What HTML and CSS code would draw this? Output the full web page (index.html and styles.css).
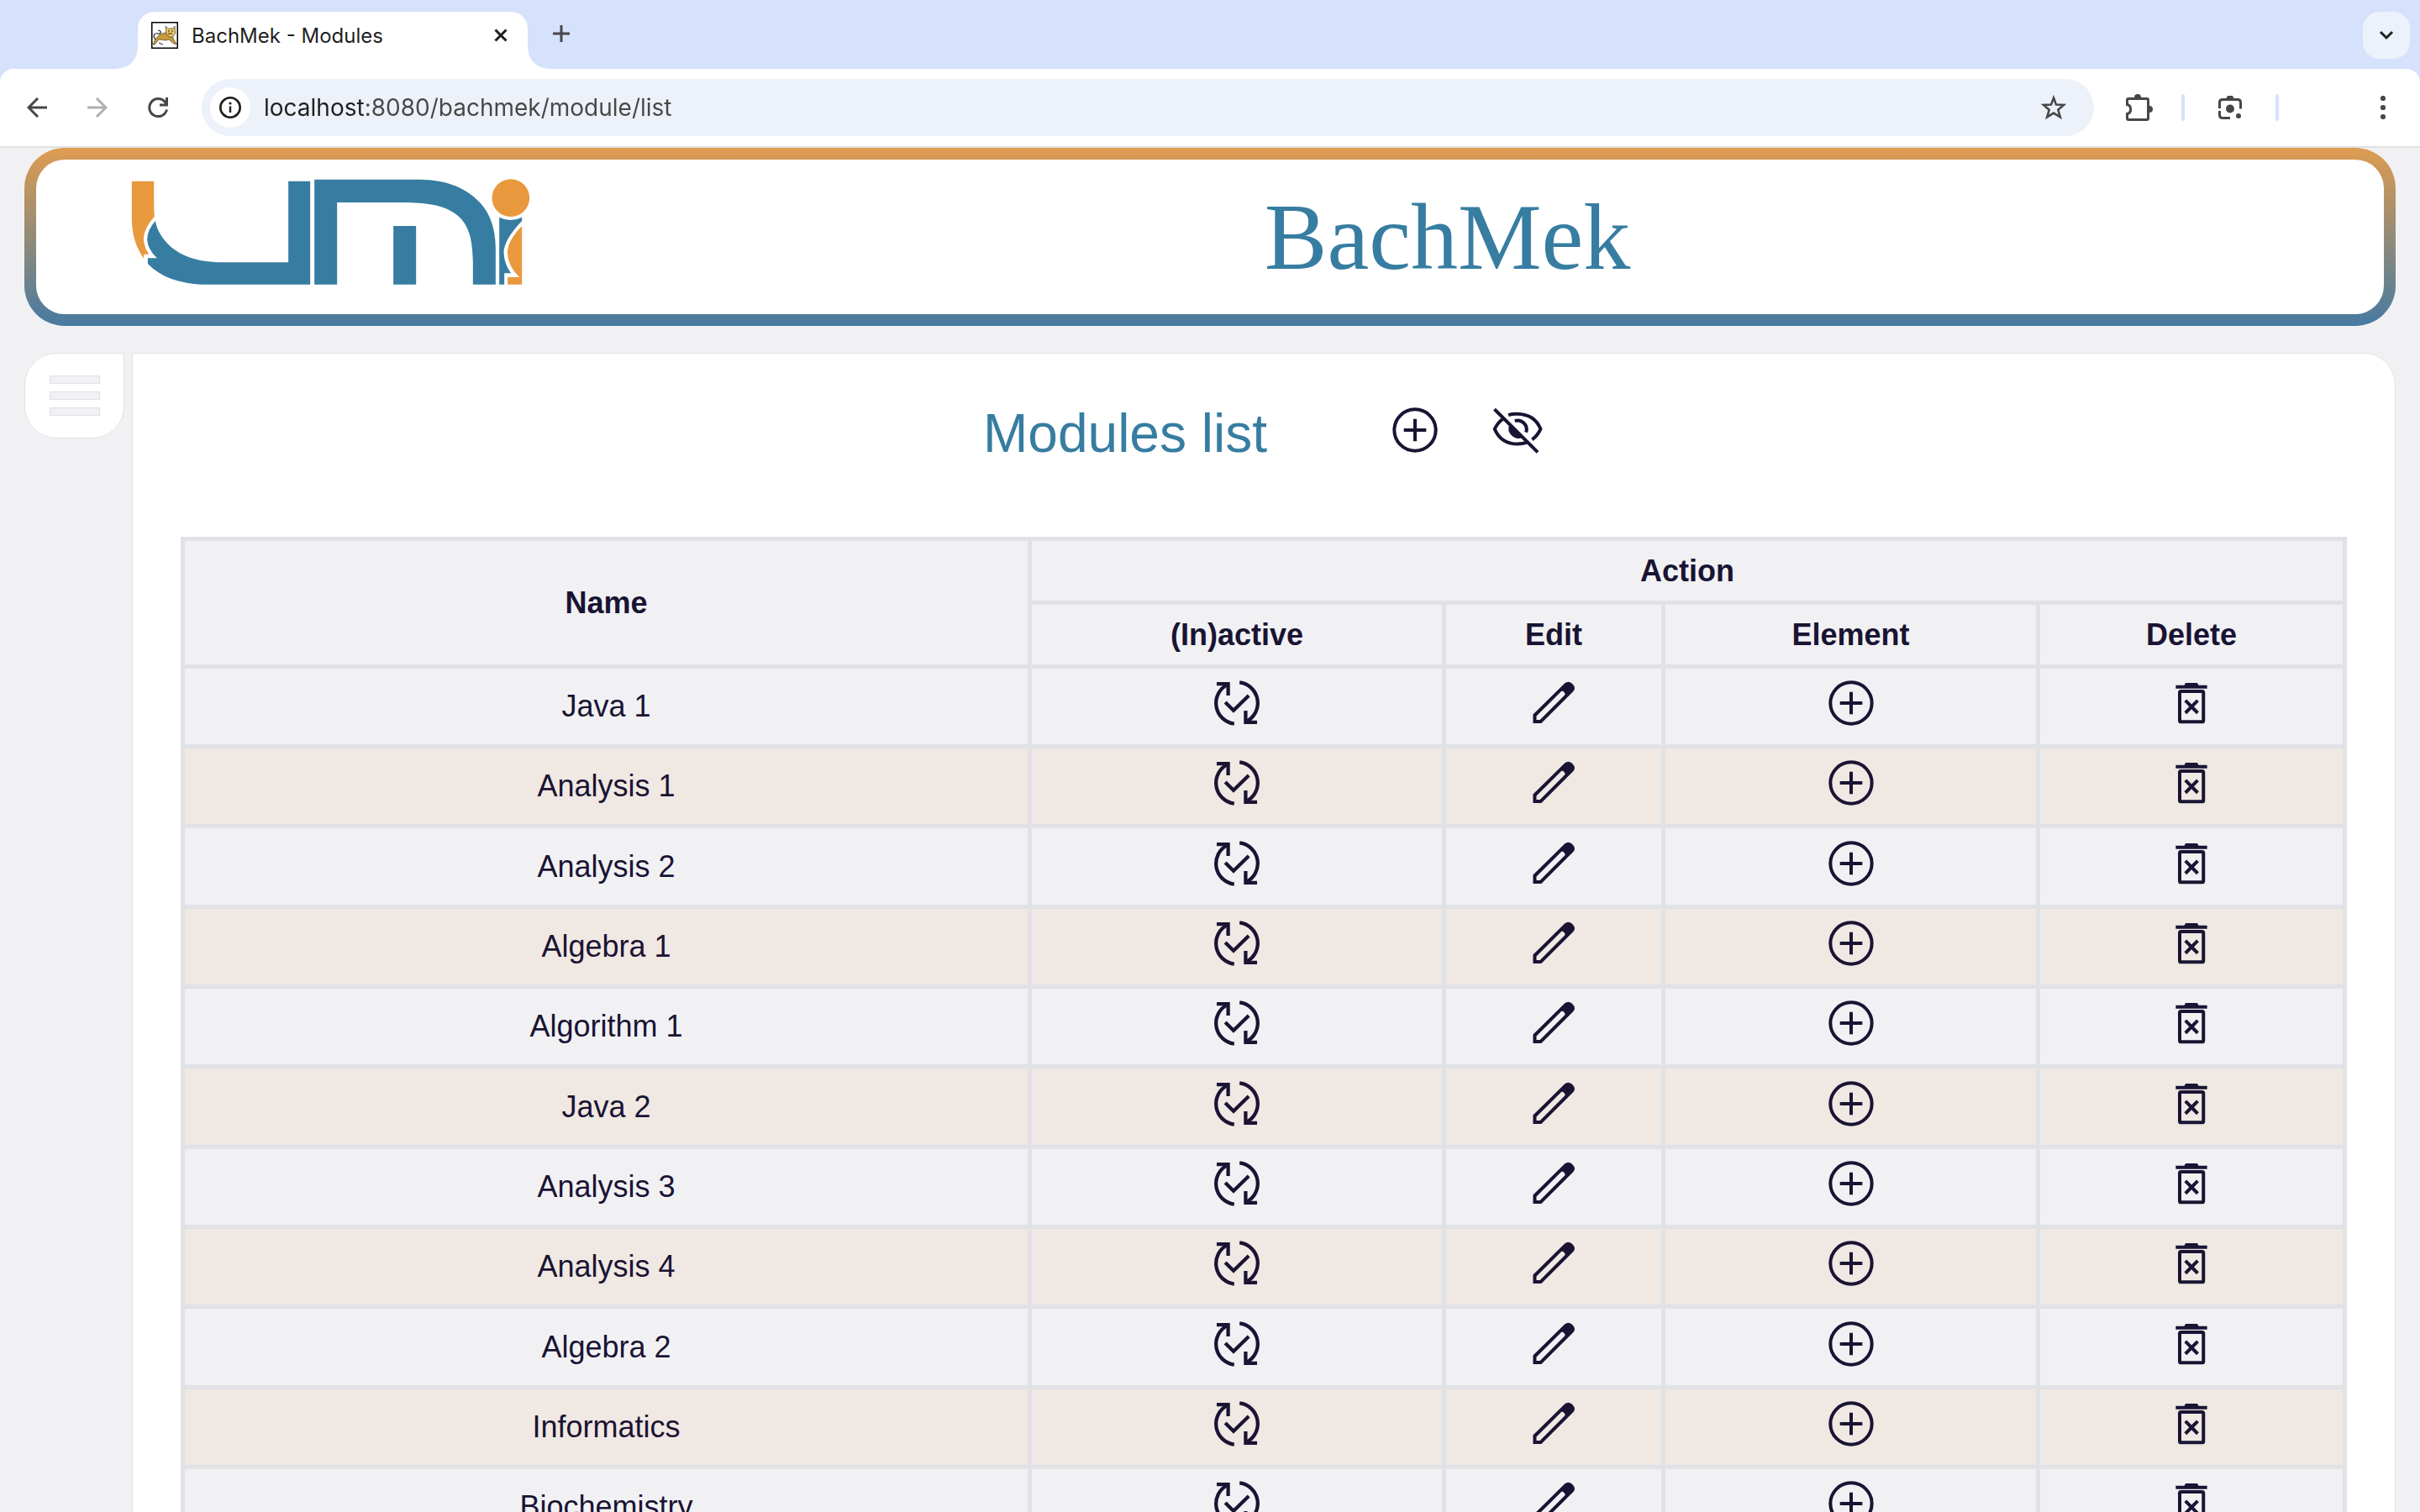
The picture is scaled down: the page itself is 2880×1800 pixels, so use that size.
FILE: index.html
```html
<!DOCTYPE html>
<html lang="en">
<head>
<meta charset="utf-8">
<title>BachMek - Modules</title>
<link rel="stylesheet" href="styles.css">
</head>
<body>
<svg class="sprite" aria-hidden="true">
  <symbol id="i-toggle" viewBox="0 0 24 24"><g fill="none" stroke="currentColor" stroke-width="1.6"><path d="M10.8 21.2A9.25 9.25 0 0 1 7.9 3.7"/><path d="M3 3.4H8.1V8.6"/><path d="M13.2 2.8A9.25 9.25 0 0 1 16.1 20.3"/><path d="M21 20.6H15.9V15.4"/><path d="M6.800 11.600L10.500 15.300L17.300 8.600"/></g></symbol>
  <symbol id="i-edit" viewBox="0 0 24 24"><path fill="currentColor" fill-rule="evenodd" d="M2.8 21V17.1L17 3.1Q18.5 1.9 20 3.1L20.8 3.9Q22 5.4 20.7 6.8L6.5 21ZM4.3 17.8V19.5H5.9L17 8.3Q17.3 7.6 16.7 7.3Q16.5 6.4 15.5 6.7Z"/></symbol>
  <symbol id="i-plus" viewBox="0 0 24 24"><g fill="none" stroke="currentColor" stroke-width="1.5"><circle cx="12" cy="12" r="9.25"/><path d="M12 7V17M7 12H17"/></g></symbol>
  <symbol id="i-trash" viewBox="0 0 24 24"><g fill="none" stroke="currentColor" stroke-width="1.5"><rect x="6.75" y="6.75" width="10.6" height="13.6" rx=".6"/><path d="M5 4.8H19"/><path d="M9.3 10.8L14.8 16.4M14.8 10.8L9.3 16.4"/></g><path fill="currentColor" d="M8.6 4.4L9.4 3H14.6L15.4 4.4Z"/></symbol>
  <symbol id="i-hidden" viewBox="0 0 24 24"><g fill="none" stroke="currentColor" stroke-width="1.5"><path d="M1.7 2.7L21 21.9"/><path d="M5.8 6.8Q3.3 8.4 1.8 11.5Q4.6 18.2 12 18.2Q14.4 18.2 16.2 17.5"/><path d="M7.9 5.3Q9.8 4.7 12 4.8Q19.6 5 22.3 11.5Q21 14.4 18.5 16.3"/><path d="M10.8 7.9A4 4 0 0 1 15.8 13"/></g><path fill="currentColor" d="M8.5 9.4A4.4 4.4 0 0 0 14.3 15.3Z"/></symbol>
</svg>

<div class="tabs">
  <div class="tab">
    <svg class="favicon" viewBox="0 0 32 32" aria-hidden="true"><rect x=".75" y=".75" width="30.5" height="30.5" fill="#fff" stroke="#000" stroke-width="1.5"/><path d="M2 27C5 20 8 15 16 13L26 15C25 19 27 22 31 27L27 26 21 21C17 23 13 21 9 21L4 27Z" fill="#c99a3c" stroke="#5a4a2c" stroke-width=".8"/><path d="M17 5L20 8H26L28 5 28.500 14 24 19 18 15Z" fill="#e9c766" stroke="#5a4a2c" stroke-width=".8"/><path d="M5 21C1 16 4 13 8 14 12 15 13 11 8 10" fill="none" stroke="#222" stroke-width="1.2"/><path d="M20 11H22M24 11H26M20 14H25M9 25L14 27" stroke="#222" stroke-width="1"/></svg>
    <span class="tab-title">BachMek - Modules</span>
    <button class="bare" aria-label="Close tab"><svg width="16" height="16" viewBox="0 0 16 16"><path d="M1.500 1.500L14.500 14.500M14.500 1.500L1.500 14.500" stroke="#1f1f1f" stroke-width="3"/></svg></button>
  </div>
  <button class="bare new-tab" aria-label="New tab"><svg width="20" height="20" viewBox="0 0 20 20"><path d="M10 0V20M0 10H20" stroke="#474747" stroke-width="3"/></svg></button>
  <button class="bare tab-search" aria-label="Search tabs"><svg width="18" height="12" viewBox="0 0 18 12"><path d="M2 2L9 9L16 2" fill="none" stroke="#1f1f1f" stroke-width="3"/></svg></button>
</div>

<div class="toolbar">
  <div class="nav">
    <button class="bare" aria-label="Back"><svg width="24" height="24" viewBox="0 0 24 24"><path d="M24 12H2M13 1L2 12L13 23" fill="none" stroke="#474747" stroke-width="3"/></svg></button>
    <button class="bare" aria-label="Forward"><svg width="24" height="24" viewBox="0 0 24 24"><path d="M0 12H22M11 1L22 12L11 23" fill="none" stroke="#b0b0b0" stroke-width="3"/></svg></button>
    <button class="bare" aria-label="Reload"><svg width="24" height="24" viewBox="0 0 24 24"><path d="M22.500 14.500A10.500 10.500 0 1 1 20.500 5.500L22 8.500M22.500 0V9H14" fill="none" stroke="#474747" stroke-width="3"/></svg></button>
  </div>
  <div class="omnibox">
    <button class="bare site-info" aria-label="Site information"><svg width="26" height="26" viewBox="0 0 26 26"><circle cx="13" cy="13" r="11.700" fill="none" stroke="#1f1f1f" stroke-width="2.600"/><path d="M13 11.500V19" stroke="#1f1f1f" stroke-width="2.400"/><circle cx="13" cy="8" r="1.600" fill="#1f1f1f"/></svg></button>
    <input class="url" type="text" aria-label="Address" value="localhost:8080/bachmek/module/list">
    <button class="bare" aria-label="Bookmark"><svg width="32" height="32" viewBox="0 0 32 32"><path d="M16 4.500L19 12.600 28 13 21.300 18.800 23.800 27.300 16 22.600 8.200 27.300 10.700 18.800 4 13 13 12.600Z" fill="none" stroke="#474747" stroke-width="2.600"/></svg></button>
  </div>
  <div class="tools">
    <button class="bare" aria-label="Extensions"><svg width="32" height="32" viewBox="0 0 32 32"><path d="M3 5.500H25Q26.500 5.500 26.500 7V29Q26.500 30.500 25 30.500H3Q1.500 30.500 1.500 29V23.500C7 22.500 7 13.500 1.500 12.500V7Q1.500 5.500 3 5.500Z" fill="none" stroke="#474747" stroke-width="3"/><path d="M10 4A4 4 0 0 1 18 4ZM28 14A4 4 0 0 1 28 22Z" fill="#474747"/></svg></button>
    <span class="divider"></span>
    <button class="bare lens" aria-label="Search with Lens"><svg width="28" height="28" viewBox="0 0 28 28"><g fill="none" stroke="#474747" stroke-width="3"><path d="M1.500 15V8Q1.500 4.500 5 4.500H23Q26.500 4.500 26.500 8V15.500"/><path d="M1.500 18V23Q1.500 26.500 5 26.500H14"/></g><path d="M9 4L11 0H17L19 4Z" fill="#474747"/><circle cx="14" cy="15.500" r="5" fill="#474747"/><circle cx="24" cy="24" r="3" fill="#474747"/></svg></button>
    <span class="divider"></span>
    <button class="bare menu-dots" aria-label="Browser menu"><svg width="8" height="28" viewBox="0 0 8 28"><g fill="#474747"><circle cx="4" cy="3" r="3.100"/><circle cx="4" cy="14" r="3.100"/><circle cx="4" cy="25" r="3.100"/></g></svg></button>
  </div>
</div>

<div class="page">
  <header class="banner">
    <svg class="logo" viewBox="48 40 1424 378" role="img" aria-label="UMI">
      <g fill="#377da1">
        <path d="M134 190C140 225 160 255 190 283C235 320 290 338 380 338H609V48H687V417H300C220 413 155 392 107 343V323H140Q106 290 105 255Q106 222 134 190Z"/>
        <path d="M702 42H1080C1180 44 1250 75 1300 132C1335 175 1349 230 1349 290V417H1268V335C1266 270 1260 225 1228 185C1185 135 1110 124 1010 124H783V417H702Z"/>
        <path d="M984 208H1065V417H984Z"/>
        <path d="M1362 177Q1402 197 1443 177V190Q1378 258 1378 303Q1380 345 1404 377H1380V417H1362Z"/>
      </g>
      <g fill="#e9993d">
        <path d="M50 48H129V125Q129 155 131 174Q94 215 92 253Q94 285 111 309H93V324Q50 265 50 180Z"/>
        <circle cx="1403" cy="108" r="67"/>
        <path d="M1443 208V417H1392V391H1434Q1392 350 1391 303Q1392 260 1443 208Z"/>
      </g>
    </svg>
    <h1 class="brand">BachMek</h1>
  </header>

  <div class="body-row">
    <button class="menu" aria-label="Menu"><span class="bar"></span><span class="bar"></span><span class="bar"></span></button>
    <main class="content">
      <div class="heading">
        <h2 class="title">Modules list</h2>
        <div class="heading-actions">
          <a class="act" href="#" aria-label="Add module"><svg class="icon"><use href="#i-plus"/></svg></a>
          <a class="act" href="#" aria-label="Show inactive modules"><svg class="icon"><use href="#i-hidden"/></svg></a>
        </div>
      </div>
      <table class="modules">
        <colgroup><col class="c-name"><col class="c-active"><col class="c-edit"><col class="c-element"><col class="c-delete"></colgroup>
        <thead>
          <tr><th rowspan="2">Name</th><th colspan="4">Action</th></tr>
          <tr><th>(In)active</th><th>Edit</th><th>Element</th><th>Delete</th></tr>
        </thead>
        <tbody>
          <tr><td>Java 1</td><td><button class="act" aria-label="Toggle"><svg class="icon"><use href="#i-toggle"/></svg></button></td><td><a class="act" href="#" aria-label="Edit"><svg class="icon"><use href="#i-edit"/></svg></a></td><td><a class="act" href="#" aria-label="Add element"><svg class="icon"><use href="#i-plus"/></svg></a></td><td><button class="act" aria-label="Delete"><svg class="icon"><use href="#i-trash"/></svg></button></td></tr>
          <tr><td>Analysis 1</td><td><button class="act" aria-label="Toggle"><svg class="icon"><use href="#i-toggle"/></svg></button></td><td><a class="act" href="#" aria-label="Edit"><svg class="icon"><use href="#i-edit"/></svg></a></td><td><a class="act" href="#" aria-label="Add element"><svg class="icon"><use href="#i-plus"/></svg></a></td><td><button class="act" aria-label="Delete"><svg class="icon"><use href="#i-trash"/></svg></button></td></tr>
          <tr><td>Analysis 2</td><td><button class="act" aria-label="Toggle"><svg class="icon"><use href="#i-toggle"/></svg></button></td><td><a class="act" href="#" aria-label="Edit"><svg class="icon"><use href="#i-edit"/></svg></a></td><td><a class="act" href="#" aria-label="Add element"><svg class="icon"><use href="#i-plus"/></svg></a></td><td><button class="act" aria-label="Delete"><svg class="icon"><use href="#i-trash"/></svg></button></td></tr>
          <tr><td>Algebra 1</td><td><button class="act" aria-label="Toggle"><svg class="icon"><use href="#i-toggle"/></svg></button></td><td><a class="act" href="#" aria-label="Edit"><svg class="icon"><use href="#i-edit"/></svg></a></td><td><a class="act" href="#" aria-label="Add element"><svg class="icon"><use href="#i-plus"/></svg></a></td><td><button class="act" aria-label="Delete"><svg class="icon"><use href="#i-trash"/></svg></button></td></tr>
          <tr><td>Algorithm 1</td><td><button class="act" aria-label="Toggle"><svg class="icon"><use href="#i-toggle"/></svg></button></td><td><a class="act" href="#" aria-label="Edit"><svg class="icon"><use href="#i-edit"/></svg></a></td><td><a class="act" href="#" aria-label="Add element"><svg class="icon"><use href="#i-plus"/></svg></a></td><td><button class="act" aria-label="Delete"><svg class="icon"><use href="#i-trash"/></svg></button></td></tr>
          <tr><td>Java 2</td><td><button class="act" aria-label="Toggle"><svg class="icon"><use href="#i-toggle"/></svg></button></td><td><a class="act" href="#" aria-label="Edit"><svg class="icon"><use href="#i-edit"/></svg></a></td><td><a class="act" href="#" aria-label="Add element"><svg class="icon"><use href="#i-plus"/></svg></a></td><td><button class="act" aria-label="Delete"><svg class="icon"><use href="#i-trash"/></svg></button></td></tr>
          <tr><td>Analysis 3</td><td><button class="act" aria-label="Toggle"><svg class="icon"><use href="#i-toggle"/></svg></button></td><td><a class="act" href="#" aria-label="Edit"><svg class="icon"><use href="#i-edit"/></svg></a></td><td><a class="act" href="#" aria-label="Add element"><svg class="icon"><use href="#i-plus"/></svg></a></td><td><button class="act" aria-label="Delete"><svg class="icon"><use href="#i-trash"/></svg></button></td></tr>
          <tr><td>Analysis 4</td><td><button class="act" aria-label="Toggle"><svg class="icon"><use href="#i-toggle"/></svg></button></td><td><a class="act" href="#" aria-label="Edit"><svg class="icon"><use href="#i-edit"/></svg></a></td><td><a class="act" href="#" aria-label="Add element"><svg class="icon"><use href="#i-plus"/></svg></a></td><td><button class="act" aria-label="Delete"><svg class="icon"><use href="#i-trash"/></svg></button></td></tr>
          <tr><td>Algebra 2</td><td><button class="act" aria-label="Toggle"><svg class="icon"><use href="#i-toggle"/></svg></button></td><td><a class="act" href="#" aria-label="Edit"><svg class="icon"><use href="#i-edit"/></svg></a></td><td><a class="act" href="#" aria-label="Add element"><svg class="icon"><use href="#i-plus"/></svg></a></td><td><button class="act" aria-label="Delete"><svg class="icon"><use href="#i-trash"/></svg></button></td></tr>
          <tr><td>Informatics</td><td><button class="act" aria-label="Toggle"><svg class="icon"><use href="#i-toggle"/></svg></button></td><td><a class="act" href="#" aria-label="Edit"><svg class="icon"><use href="#i-edit"/></svg></a></td><td><a class="act" href="#" aria-label="Add element"><svg class="icon"><use href="#i-plus"/></svg></a></td><td><button class="act" aria-label="Delete"><svg class="icon"><use href="#i-trash"/></svg></button></td></tr>
          <tr><td>Biochemistry</td><td><button class="act" aria-label="Toggle"><svg class="icon"><use href="#i-toggle"/></svg></button></td><td><a class="act" href="#" aria-label="Edit"><svg class="icon"><use href="#i-edit"/></svg></a></td><td><a class="act" href="#" aria-label="Add element"><svg class="icon"><use href="#i-plus"/></svg></a></td><td><button class="act" aria-label="Delete"><svg class="icon"><use href="#i-trash"/></svg></button></td></tr>
        </tbody>
      </table>
    </main>
  </div>
</div>
</body>
</html>
```
FILE: styles.css
```css
* { box-sizing: border-box; }

body {
  margin: 0;
  height: 100vh;
  overflow: hidden;
  display: flex;
  flex-direction: column;
  background: #d6e1fb;
  color: #191433;
  font-family: "Liberation Sans", Arial, sans-serif;
}

.sprite { display: none; }
svg { display: block; }

.bare {
  padding: 0;
  border: 0;
  background: none;
  display: flex;
  align-items: center;
  justify-content: center;
}

/* Browser tab strip */
.tabs {
  flex: none;
  height: 82px;
  padding: 14px 12px 0 164px;
  display: flex;
}

.tab {
  position: relative;
  width: 464px;
  padding: 0 24px 12px 16px;
  display: flex;
  align-items: center;
  gap: 16px;
  background: #fff;
  border-radius: 20px 20px 0 0;
}

.tab::before,
.tab::after {
  content: "";
  position: absolute;
  bottom: 0;
  width: 24px;
  height: 24px;
}
.tab::before { right: 100%; background: radial-gradient(circle at 0 0, transparent 23px, #fff 24px); }
.tab::after { left: 100%; background: radial-gradient(circle at 100% 0, transparent 23px, #fff 24px); }

.favicon { width: 32px; height: 32px; }

.tab-title {
  flex: 1;
  color: #1f1f1f;
  font: 24px "Inter", sans-serif;
}

.new-tab { width: 80px; height: 52px; }

.tab-search {
  width: 56px;
  height: 56px;
  margin-left: auto;
  border-radius: 20px;
  background: #ecf2fc;
}

/* Browser toolbar */
.toolbar {
  flex: none;
  height: 94px;
  padding: 0 40px 0 32px;
  display: flex;
  align-items: center;
  background: #fff;
  border-bottom: 2px solid #e0e2e2;
  border-radius: 16px 16px 0 0;
}

.nav { display: flex; gap: 48px; margin-right: 40px; }

.omnibox {
  flex: 1;
  height: 68px;
  padding: 0 32px 0 10px;
  display: flex;
  align-items: center;
  background: #edf1f9;
  border-radius: 34px;
}

.site-info {
  width: 48px;
  height: 48px;
  border-radius: 50%;
  background: #fff;
}

.url {
  flex: 1;
  margin-left: 16px;
  padding: 0;
  border: 0;
  outline: 0;
  font: 28px "Inter", sans-serif;
  background: linear-gradient(to right, #1f1f1f 119px, #474747 119px);
  background-clip: text;
  -webkit-text-fill-color: transparent;
}

.tools {
  width: 348px;
  padding-left: 38px;
  display: flex;
  align-items: center;
}

.divider {
  width: 4px;
  height: 32px;
  margin: 0 34px;
  border-radius: 2px;
  background: #d6e1fb;
}

.lens { width: 40px; }

.menu-dots { margin-left: auto; }

/* Application */
.page {
  flex: 1;
  min-height: 0;
  padding: 0 29px;
  background: #f1f1f4;
}

.banner {
  display: flex;
  align-items: flex-start;
  padding: 0 23px 0 113px;
  border: 14px solid transparent;
  border-radius: 48px;
  background: linear-gradient(#fff, #fff) padding-box, linear-gradient(#df9c50, #477aa1) border-box;
}

.logo { flex: none; width: 475px; height: 126px; margin-top: 23px; }

.brand {
  flex: 1;
  margin: 0;
  text-align: center;
  color: #377da1;
  font: 112px/184px "Liberation Serif", "Times New Roman", serif;
}

.body-row {
  display: flex;
  align-items: flex-start;
  gap: 9px;
  margin-top: 32px;
}

.menu {
  width: 119px;
  height: 102px;
  padding: 0;
  display: flex;
  flex-direction: column;
  align-items: center;
  justify-content: center;
  gap: 9px;
  background: #fff;
  border: 1px solid #e1e2e6;
  border-radius: 38px 0 38px 38px;
}

.bar {
  width: 60px;
  height: 10px;
  background: #f1f1f4;
  border: 1px solid #e1e2e6;
}

.content {
  flex: 1;
  padding: 0 57px 57px;
  background: #fff;
  border: 1px solid #e1e2e6;
  border-radius: 0 38px 38px 38px;
}

.heading {
  display: flex;
  align-items: center;
  justify-content: center;
  gap: 144px;
  height: 190px;
  margin-bottom: 28px;
}

.title {
  margin: 0;
  color: #377da1;
  font-size: 64px;
  font-weight: 400;
}

.heading-actions { display: flex; gap: 58px; }

.act {
  display: block;
  width: 64px;
  margin: 0 auto;
  padding: 0 0 8px;
  border: 0;
  background: none;
  color: inherit;
}

.icon { width: 64px; height: 64px; }

.modules {
  width: 100%;
  table-layout: fixed;
  border-collapse: collapse;
  font-size: 36px;
  text-align: center;
}

.modules th,
.modules td {
  padding: 0;
  border: 5px solid #e1e2e6;
  background: #f1f1f4;
}

.modules tr { height: 95px; }
.modules thead tr { height: 76px; }
.modules tbody tr:nth-child(3n) { height: 96px; }
.modules tbody tr:nth-child(even) td { background: #f0e8e2; }

.c-name { width: 1008px; }
.c-active { width: 493px; }
.c-edit { width: 261px; }
.c-element { width: 446px; }
.c-delete { width: 365px; }
```
